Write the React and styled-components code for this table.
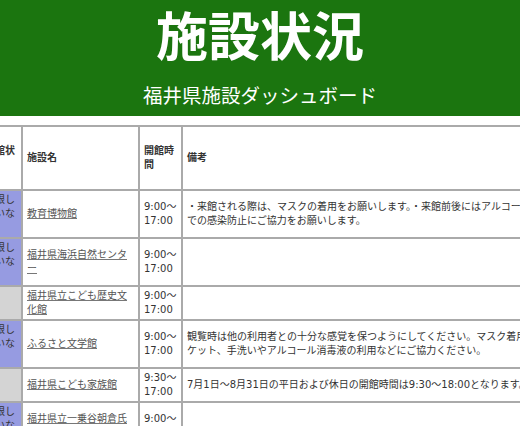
import React from 'react';
import styled, {createGlobalStyle} from 'styled-components';

const GlobalStyle = createGlobalStyle`
  html, body {
    margin: 0;
    padding: 0;
    background: #fff;
  }
  body {
    font-family: "Noto Sans CJK JP", "Noto Sans", sans-serif;
  }
`;

const Page = styled.div`
  width: 520px;
  height: 426px;
  overflow: hidden;
`;

const Banner = styled.header`
  background: #1b750f;
  color: #fff;
  display: flex;
  flex-direction: column;
  align-items: center;
  padding: 4px 0 9px;
`;

const Title = styled.h1`
  margin: 0;
  font-size: 52px;
  line-height: 60px;
  font-weight: 700;
`;

const Subtitle = styled.div`
  margin-top: 19px;
  font-size: 19.5px;
  line-height: 24px;
`;

const TableWrap = styled.div`
  margin-top: 9px;
  overflow: hidden;
`;

const Grid = styled.div`
  display: grid;
  grid-template-columns: 40px 115px 41px 440px;
  gap: 2px;
  padding-top: 2px;
  margin-left: -19px;
  width: max-content;
  background: #aaa;
  font-family: "DejaVu Sans", "Noto Sans CJK JP", sans-serif;
  font-size: 10px;
  line-height: 14px;
  color: #333;
  line-break: loose;
`;

const CellBase = styled.div`
  display: flex;
  flex-direction: column;
  justify-content: center;
  padding: 2px 4px;
  background: #fff;
`;

const HeadCell = styled(CellBase)`
  height: 58px;
  font-weight: 700;
`;

const StatusCell = styled(CellBase)`
  background: ${p => p.$open ? '#969be1' : '#d4d4d4'};
`;

const Cell = styled(CellBase)`
  white-space: ${p => p.$nowrap ? 'nowrap' : 'normal'};
`;

const NameLink = styled.a`
  color: #555;
  text-decoration: underline;
  text-decoration-color: #777;
`;

const rows = [
  {
    open: true,
    name: '教育博物館',
    time: ['9:00～', '17:00'],
    note: [
      '・来館される際は、マスクの着用をお願いします。・来館前後にはアルコール消毒',
      'での感染防止にご協力をお願いします。',
    ],
  },
  {open: true, name: '福井県海浜自然センター', time: ['9:00～', '17:00'], note: []},
  {open: false, name: '福井県立こども歴史文化館', time: ['9:00～', '17:00'], note: []},
  {
    open: true,
    name: 'ふるさと文学館',
    time: ['9:00～', '17:00'],
    note: [
      '観覧時は他の利用者との十分な感覚を保つようにしてください。マスク着用、咳エチ',
      'ケット、手洗いやアルコール消毒液の利用などにご協力ください。',
    ],
  },
  {
    open: false,
    name: '福井県こども家族館',
    time: ['9:30～', '17:00'],
    note: ['7月1日～8月31日の平日および休日の開館時間は9:30～18:00となります。'],
  },
  {open: true, name: '福井県立一乗谷朝倉氏遺跡資料館', time: ['9:00～', '17:00'], note: []},
];

const Lines = ({lines}) => (
  <div>
    {lines.map((line, idx) =>
      <React.Fragment key={idx}>
        {idx > 0 && <br />}
        {line}
      </React.Fragment>
    )}
  </div>
);

export default function App() {
  return (
    <Page>
      <GlobalStyle />
      <Banner>
        <Title>施設状況</Title>
        <Subtitle>福井県施設ダッシュボード</Subtitle>
      </Banner>
      <TableWrap>
        <Grid>
          <HeadCell><div>開館状況</div></HeadCell>
          <HeadCell><div>施設名</div></HeadCell>
          <HeadCell><div>開館時間</div></HeadCell>
          <HeadCell><div>備考</div></HeadCell>
          {rows.map(row =>
            <React.Fragment key={row.name}>
              <StatusCell $open={row.open}>
                <div>{row.open ? '制限していない' : '－'}</div>
              </StatusCell>
              <Cell>
                <div><NameLink href="#">{row.name}</NameLink></div>
              </Cell>
              <Cell $nowrap><Lines lines={row.time} /></Cell>
              <Cell $nowrap><Lines lines={row.note} /></Cell>
            </React.Fragment>
          )}
        </Grid>
      </TableWrap>
    </Page>
  );
}
